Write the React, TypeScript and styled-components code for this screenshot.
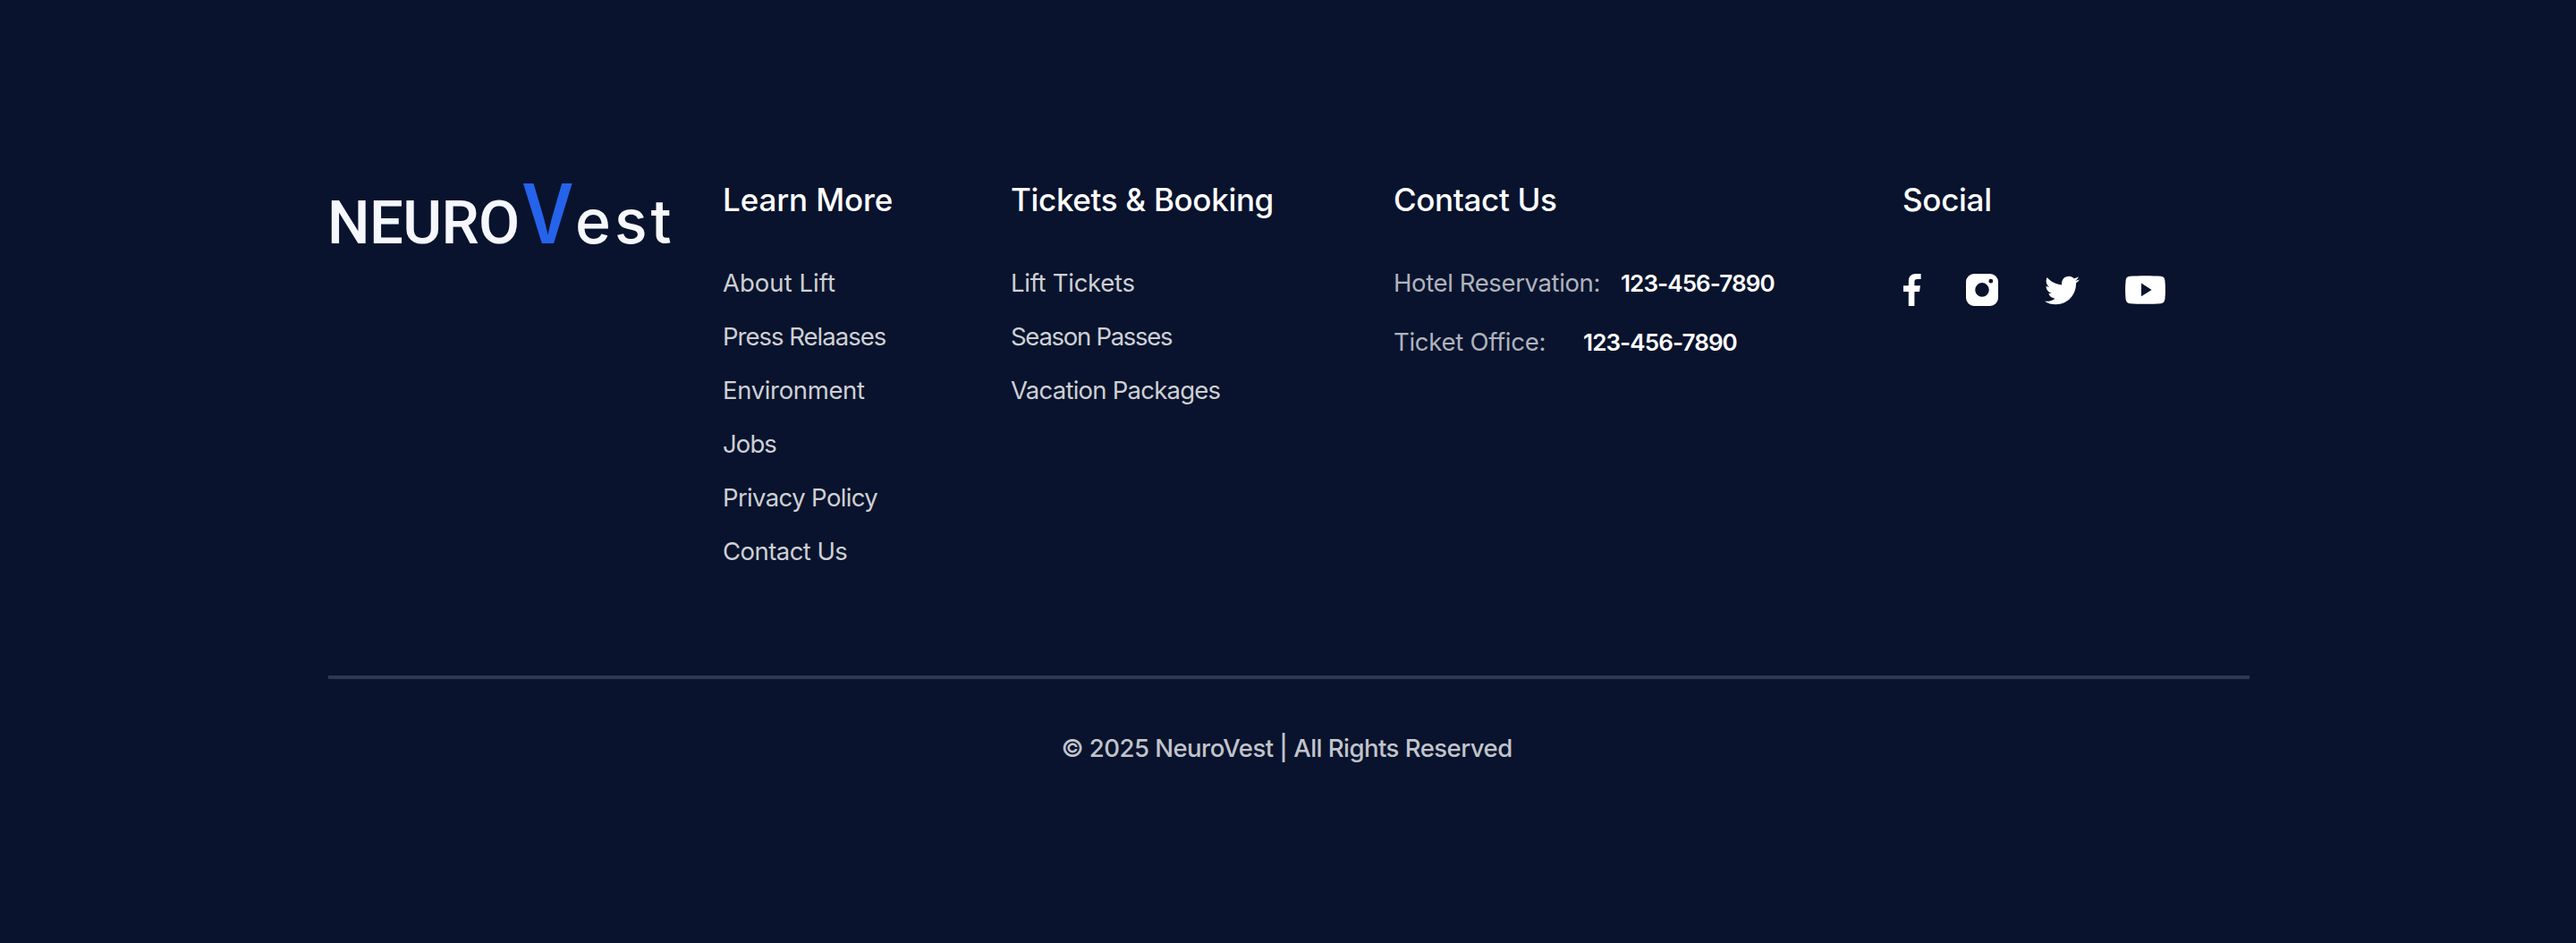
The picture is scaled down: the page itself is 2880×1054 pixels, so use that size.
import React from "react";
import styled, { createGlobalStyle } from "styled-components";
import { FaTwitter } from "react-icons/fa";

const GlobalStyle = createGlobalStyle`
  body {
    margin: 0;
    background: #09132d;
    font-family: Inter, "Liberation Sans", sans-serif;
  }
`;

const Footer = styled.footer`
  box-sizing: border-box;
  min-height: 1054px;
  padding: 199px 365px 0 367px;
  background: #09132d;
  white-space: nowrap;
`;

const Columns = styled.div`
  display: grid;
  grid-template-columns: 441px 322px 428px 569px 1fr;
  height: 556px;
`;

const Logo = styled.div`
  display: flex;
  align-items: baseline;
  height: 80px;
  margin: -1px 0 0 -1px;
  color: #f5f7fc;
  line-height: 80px;
`;

const LogoStart = styled.span`
  width: 217px;
  font: 500 67px/80px Roboto, "Liberation Sans", sans-serif;
  letter-spacing: -0.6px;
`;

const LogoLetter = styled.span`
  width: 60px;
  color: #2563eb;
  font-size: 92.5px;
  font-weight: 600;
  transform: scaleX(0.87);
  transform-origin: left;
`;

const LogoEnd = styled.span`
  font-size: 68px;
  font-weight: 500;
  letter-spacing: 4px;
`;

const Heading = styled.h2<{ $tracking?: number }>`
  margin: 0 0 39px;
  color: #fff;
  font-size: 35px;
  font-weight: 500;
  line-height: 48px;
  letter-spacing: ${(p) => p.$tracking ?? 0}px;
`;

const List = styled.ul`
  margin: 0;
  padding: 0;
  list-style: none;
`;

const Item = styled.li<{ $tracking: number }>`
  height: 60px;
  color: #ced0d5;
  font-size: 27.5px;
  line-height: 60px;
  letter-spacing: ${(p) => p.$tracking}px;
`;

const Contacts = styled.div`
  margin-top: -3px;
`;

const ContactRow = styled.div<{ $gap: number }>`
  display: flex;
  align-items: baseline;
  gap: ${(p) => p.$gap}px;
  height: 66px;
  line-height: 66px;
`;

const Label = styled.span<{ $tracking: number }>`
  color: #b0b3bd;
  font-size: 27.5px;
  letter-spacing: ${(p) => p.$tracking}px;
`;

const Phone = styled.span`
  color: #fff;
  font-size: 26px;
  font-weight: 600;
  letter-spacing: -0.9px;
`;

const Icons = styled.div`
  display: flex;
  align-items: center;
  height: 36px;
  margin: 59px 0 0 1px;
  color: #fff;

  svg {
    display: block;
    fill: currentColor;
  }
  svg:nth-child(2) {
    margin-left: 50px;
  }
  svg:nth-child(3) {
    margin-left: 52px;
  }
  svg:nth-child(4) {
    margin-left: 51px;
  }
`;

const Divider = styled.hr`
  height: 4px;
  margin: 0;
  border: 0;
  background: #2e384e;
`;

const Copyright = styled.p`
  margin: 55px 0 0 -5px;
  color: #c1c4cb;
  font-size: 27.5px;
  font-weight: 500;
  line-height: 44px;
  letter-spacing: -0.52px;
  text-align: center;
`;

type Entry = [label: string, tracking: number];

const learnMore: Entry[] = [
  ["About Lift", 0.02],
  ["Press Relaases", -1],
  ["Environment", -0.35],
  ["Jobs", -0.9],
  ["Privacy Policy", -0.63],
  ["Contact Us", -0.55],
];

const tickets: Entry[] = [
  ["Lift Tickets", -0.28],
  ["Season Passes", -1.28],
  ["Vacation Packages", -0.76],
];

const Links = ({ items }: { items: Entry[] }) => (
  <List>
    {items.map(([label, tracking]) => (
      <Item key={label} $tracking={tracking}>
        {label}
      </Item>
    ))}
  </List>
);

const FacebookIcon = () => (
  <svg width="20" height="36" viewBox="0 0 20 36">
    <path d="M5.8 36V20H0v-6.7h5.8V8.4C5.8 2.900 8.900 0 14 0h5.600v6h-3.800c-2.600 0-3.400 1-3.400 3.200v4.100h6.500l-.9 6.700h-5.600v16Z" />
  </svg>
);

const InstagramIcon = () => (
  <svg width="36" height="36" viewBox="0 0 36 36">
    <path
      fillRule="evenodd"
      d="M9 0h18a9 9 0 0 1 9 9v18a9 9 0 0 1-9 9H9a9 9 0 0 1-9-9V9a9 9 0 0 1 9-9Zm9 10.100a7.800 7.800 0 1 0 0 15.600 7.800 7.800 0 0 0 0-15.600Zm9.800-4.300a2.400 2.400 0 1 0 0 4.800 2.400 2.400 0 0 0 0-4.800Z"
    />
  </svg>
);

const YoutubeIcon = () => (
  <svg width="45" height="32" viewBox="0 0 45 32">
    <path
      fillRule="evenodd"
      d="M5.2.8C14 0 31 0 39.8.8c2.9.3 4.3 1.8 4.6 4.6.7 6.5.7 14.7 0 21.2-.3 2.8-1.7 4.3-4.6 4.6-8.8.8-25.8.8-34.6 0C2.300 30.900.9 29.400.6 26.600c-.7-6.500-.7-14.700 0-21.200C.9 2.600 2.300 1.100 5.200.8ZM18 8.500v14.800l11.600-7.300Z"
    />
  </svg>
);

export default function App() {
  return (
    <>
      <GlobalStyle />
      <Footer>
        <Columns>
          <Logo>
            <LogoStart>NEURO</LogoStart>
            <LogoLetter>V</LogoLetter>
            <LogoEnd>est</LogoEnd>
          </Logo>
          <div>
            <Heading $tracking={-0.12}>Learn More</Heading>
            <Links items={learnMore} />
          </div>
          <div>
            <Heading $tracking={-0.33}>Tickets &amp; Booking</Heading>
            <Links items={tickets} />
          </div>
          <div>
            <Heading $tracking={-0.35}>Contact Us</Heading>
            <Contacts>
              <ContactRow $gap={23}>
                <Label $tracking={-0.38}>Hotel Reservation:</Label>
                <Phone>123-456-7890</Phone>
              </ContactRow>
              <ContactRow $gap={42}>
                <Label $tracking={-0.28}>Ticket Office:</Label>
                <Phone>123-456-7890</Phone>
              </ContactRow>
            </Contacts>
          </div>
          <div>
            <Heading $tracking={-0.3}>Social</Heading>
            <Icons>
              <FacebookIcon />
              <InstagramIcon />
              <FaTwitter size={39} />
              <YoutubeIcon />
            </Icons>
          </div>
        </Columns>
        <Divider />
        <Copyright>© 2025 NeuroVest | All Rights Reserved</Copyright>
      </Footer>
    </>
  );
}
